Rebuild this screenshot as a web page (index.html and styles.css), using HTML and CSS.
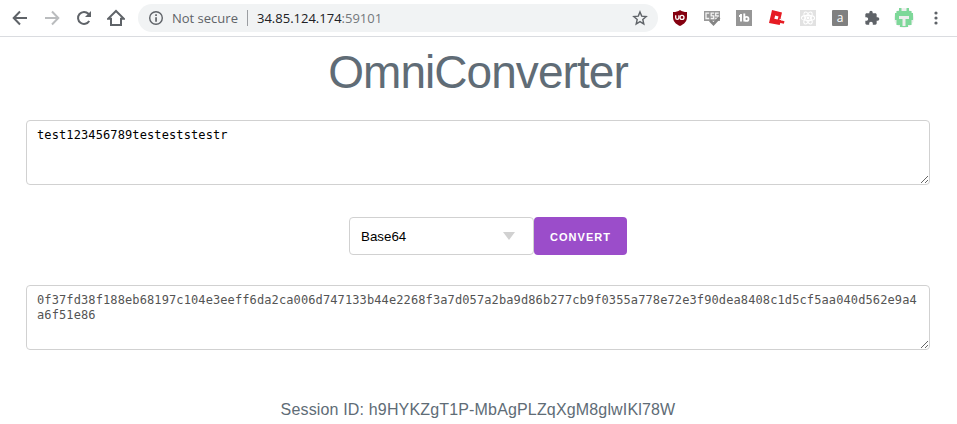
FILE: index.html
```html
<!DOCTYPE html>
<html lang="en">
<head>
<meta charset="utf-8">
<title>OmniConverter</title>
<link rel="stylesheet" href="styles.css">
</head>
<body>
<header class="toolbar">
  <span class="cell"><svg width="16" height="16" viewBox="0 0 16 16" fill="none" stroke="#5f6368" stroke-width="2"><path d="M15 8H2.5M8 1.5 1.7 8 8 14.5"/></svg></span>
  <span class="cell"><svg width="16" height="16" viewBox="0 0 16 16" fill="none" stroke="#babcbe" stroke-width="2"><path d="M1 8h12.5M8 1.5 14.3 8 8 14.5"/></svg></span>
  <span class="cell"><svg width="16" height="16" viewBox="0 0 16 16"><path d="M13.2 11A6 6 0 1 1 12.4 3.8L14 5.4" fill="none" stroke="#5f6368" stroke-width="2"/><path d="M15 1v6H9z" fill="#5f6368"/></svg></span>
  <span class="cell"><svg width="18" height="18" viewBox="0 0 18 18" fill="none" stroke="#5f6368" stroke-width="2"><path d="M1 9.8h3V16h10V9.8h3L9 2z"/></svg></span>
  <div class="address">
    <svg width="16" height="16" viewBox="0 0 16 16"><circle cx="8" cy="8" r="6.3" fill="none" stroke="#5f6368" stroke-width="1.4"/><path d="M7.2 4.3h1.7V6H7.2zM7.2 7.2h1.7v4.5H7.2z" fill="#5f6368"/></svg>
    <span class="insecure">Not secure</span>
    <span class="divider"></span>
    <span class="url">34.85.124.174<span class="port">:59101</span></span>
    <svg class="star" width="16" height="16" viewBox="0 0 16 16" fill="none" stroke="#5f6368" stroke-width="1.4"><path d="m8 1.9 1.7 4.2 4.5.4-3.4 3 1 4.5L8 11.6 4.2 14l1-4.5-3.4-3 4.5-.4z"/></svg>
  </div>
  <span class="cell"><svg width="16" height="16" viewBox="0 0 16 16"><path d="M8 0c2 1.400 4 2 7 2v5c0 4.200-2.500 7-7 9-4.500-2-7-4.800-7-9V2c3 0 5-.6 7-2z" fill="#850010"/><path d="M3.700 5.200v2.600q0 1.600 1.600 1.600 1.600 0 1.600-1.600V5.200" fill="none" stroke="#fff" stroke-width="1.300"/><circle cx="10" cy="7.400" r="2" fill="none" stroke="#fff" stroke-width="1.300"/></svg></span>
  <span class="cell"><svg width="17" height="16" viewBox="0 0 17 16"><path d="M0 1h16v10H0z" fill="#999"/><path d="M5.200 3.200H2v5.300h3.200M10.200 3.200H7.200v2.600h2.500v2.700H6.700M14.700 3.200h-3v2.600h2.500v2.700h-3" fill="none" stroke="#f4f4f4" stroke-width="1.300"/><path d="m6 10.500 3.500 3.500 6-6.500" fill="none" stroke="#858585" stroke-width="2.600"/></svg></span>
  <span class="cell"><svg width="16" height="16" viewBox="0 0 16 16"><path d="M0 0h16v16H0z" fill="#969696"/><path d="M3 6h2.500M5 4v7.500M8.300 3.500v8" fill="none" stroke="#fff" stroke-width="1.900"/><circle cx="10.500" cy="8.900" r="2" fill="none" stroke="#fff" stroke-width="1.800"/></svg></span>
  <span class="cell"><svg width="17" height="16" viewBox="0 0 17 16"><path d="m4 0 10 2.600-1.500 6.200 1 .3L11.700 15 1 13z" fill="#e61b23"/><path d="m7.200 5.500 3.300.9-.8 3.100-3.400-.8z" fill="#fff"/><path d="m10 9.500 6.500 1.700-.7 2.600-6.500-1.600z" fill="#e61b23"/><path d="m11.500 9.300 2.500.6" stroke="#fff" stroke-width="1"/></svg></span>
  <span class="cell"><svg width="16" height="16" viewBox="0 0 16 16"><path d="M0 0h16v16H0z" fill="#e2e2e2"/><g fill="none" stroke="#fff" stroke-width="1.100"><ellipse cx="8" cy="8" rx="6.600" ry="2.600"/><ellipse cx="8" cy="8" rx="6.600" ry="2.600" transform="rotate(60 8 8)"/><ellipse cx="8" cy="8" rx="6.600" ry="2.600" transform="rotate(120 8 8)"/></g><circle cx="8" cy="8" r="1.400" fill="#fff"/></svg></span>
  <span class="cell"><span class="letter">a</span></span>
  <span class="cell"><svg width="16" height="16" viewBox="0 0 24 24"><path d="M20.500 11H19V7c0-1.100-.9-2-2-2h-4V3.500a2.500 2.500 0 0 0-5 0V5H4c-1.100 0-2 .9-2 2v3.800h1.500c1.500 0 2.700 1.200 2.700 2.700S5 16.200 3.500 16.200H2V20c0 1.100.9 2 2 2h3.800v-1.500c0-1.500 1.200-2.700 2.700-2.700s2.700 1.200 2.700 2.700V22H17c1.100 0 2-.9 2-2v-4h1.500a2.500 2.500 0 0 0 0-5z" fill="#5f6368"/></svg></span>
  <span class="cell"><svg width="20" height="22" viewBox="0 0 20 22"><circle cx="10" cy="11" r="10" fill="#eeeeee"/><path d="M5 1h2.500v3h5V1H15v3h2.500v2H19v7h-1.500v5H14v2H6v-2H2.500v-5H1V6h1.500V4H5z" fill="#7ed899"/><path d="M5 9h10v3h-3.500v7h-3v-7H5z" fill="#eeeeee"/></svg></span>
  <span class="cell"><svg width="4" height="14" viewBox="0 0 4 14" fill="#5f6368"><circle cx="2" cy="2" r="1.600"/><circle cx="2" cy="7" r="1.600"/><circle cx="2" cy="12" r="1.600"/></svg></span>
</header>
<main class="page">
  <h1 class="title">OmniConverter</h1>
  <textarea class="field" spellcheck="false">test123456789testeststestr</textarea>
  <div class="controls">
    <div class="select"><span class="choice">Base64</span><svg width="12" height="8" viewBox="0 0 12 8"><path d="M0 0h12L6 8z" fill="#d1d1d1"/></svg></div>
    <button class="convert">Convert</button>
  </div>
  <textarea class="field output" readonly spellcheck="false">0f37fd38f188eb68197c104e3eeff6da2ca006d747133b44e2268f3a7d057a2ba9d86b277cb9f0355a778e72e3f90dea8408c1d5cf5aa040d562e9a4a6f51e86</textarea>
  <p class="session">Session ID: h9HYKZgT1P-MbAgPLZqXgM8glwIKl78W</p>
</main>
</body>
</html>
```
FILE: styles.css
```css
* { box-sizing: border-box; }
body {
  margin: 0;
  height: 424px;
  overflow: hidden;
  background: #fff;
  color: #606c76;
  font-family: Arial, "Liberation Sans", sans-serif;
}
.toolbar {
  display: flex;
  align-items: center;
  height: 37px;
  padding: 0 4px;
  border-bottom: 1px solid #dadce0;
}
.cell {
  display: flex;
  flex: 0 0 32px;
  justify-content: center;
}
.address {
  display: flex;
  align-items: center;
  width: 520px;
  height: 28px;
  margin: 0 6px;
  padding: 0 10px;
  border-radius: 14px;
  background: #f1f3f4;
  font: 13px/28px "Open Sans", "Noto Sans", sans-serif;
}
.insecure { width: 67px; margin-left: 8px; color: #5f6368; white-space: nowrap; }
.divider { width: 1px; height: 16px; margin: 0 9px 0 8px; background: #9b9ea2; }
.url { color: #202124; }
.port { color: #74787c; }
.star { margin-left: auto; }
.letter {
  width: 16px;
  height: 16px;
  border-radius: 1px;
  background: #808080;
  color: #fff;
  font: 12px/15px "Open Sans", sans-serif;
  text-align: center;
}
.page {
  display: flex;
  flex-direction: column;
  align-items: center;
  padding: 0 27px 0 26px;
}
.title {
  margin: 8px 0 20px;
  font-size: 46px;
  font-weight: 400;
  line-height: 55px;
  letter-spacing: -0.95px;
}
.field {
  display: block;
  width: 904px;
  height: 65px;
  margin: 0;
  padding: 7px 10px 6px;
  border: 1px solid #d1d1d1;
  border-radius: 4px;
  outline: 0;
  background: #fff;
  color: #000;
  font: 12px/15px "DejaVu Sans Mono", monospace;
  letter-spacing: 0.107px;
  word-break: break-all;
  resize: both;
}
.output { color: #545454; }
.controls {
  display: flex;
  margin: 32px 0 30px 20px;
}
.select {
  display: flex;
  align-items: center;
  justify-content: space-between;
  width: 185px;
  height: 38px;
  padding: 0 18px 0 11px;
  border: 1px solid #d1d1d1;
  border-radius: 4px;
  color: #000;
  font-size: 13.333px;
}
.convert {
  width: 93px;
  height: 38px;
  padding: 2px 0 0;
  border: 0;
  border-radius: 4px;
  background: #9b4dca;
  color: #fff;
  font: 700 11px/36px Arial, "Liberation Sans", sans-serif;
  letter-spacing: 1px;
  text-transform: uppercase;
}
.session {
  margin: 47px 0 0;
  font-size: 16px;
  line-height: 26px;
  letter-spacing: 0.16px;
}
```
